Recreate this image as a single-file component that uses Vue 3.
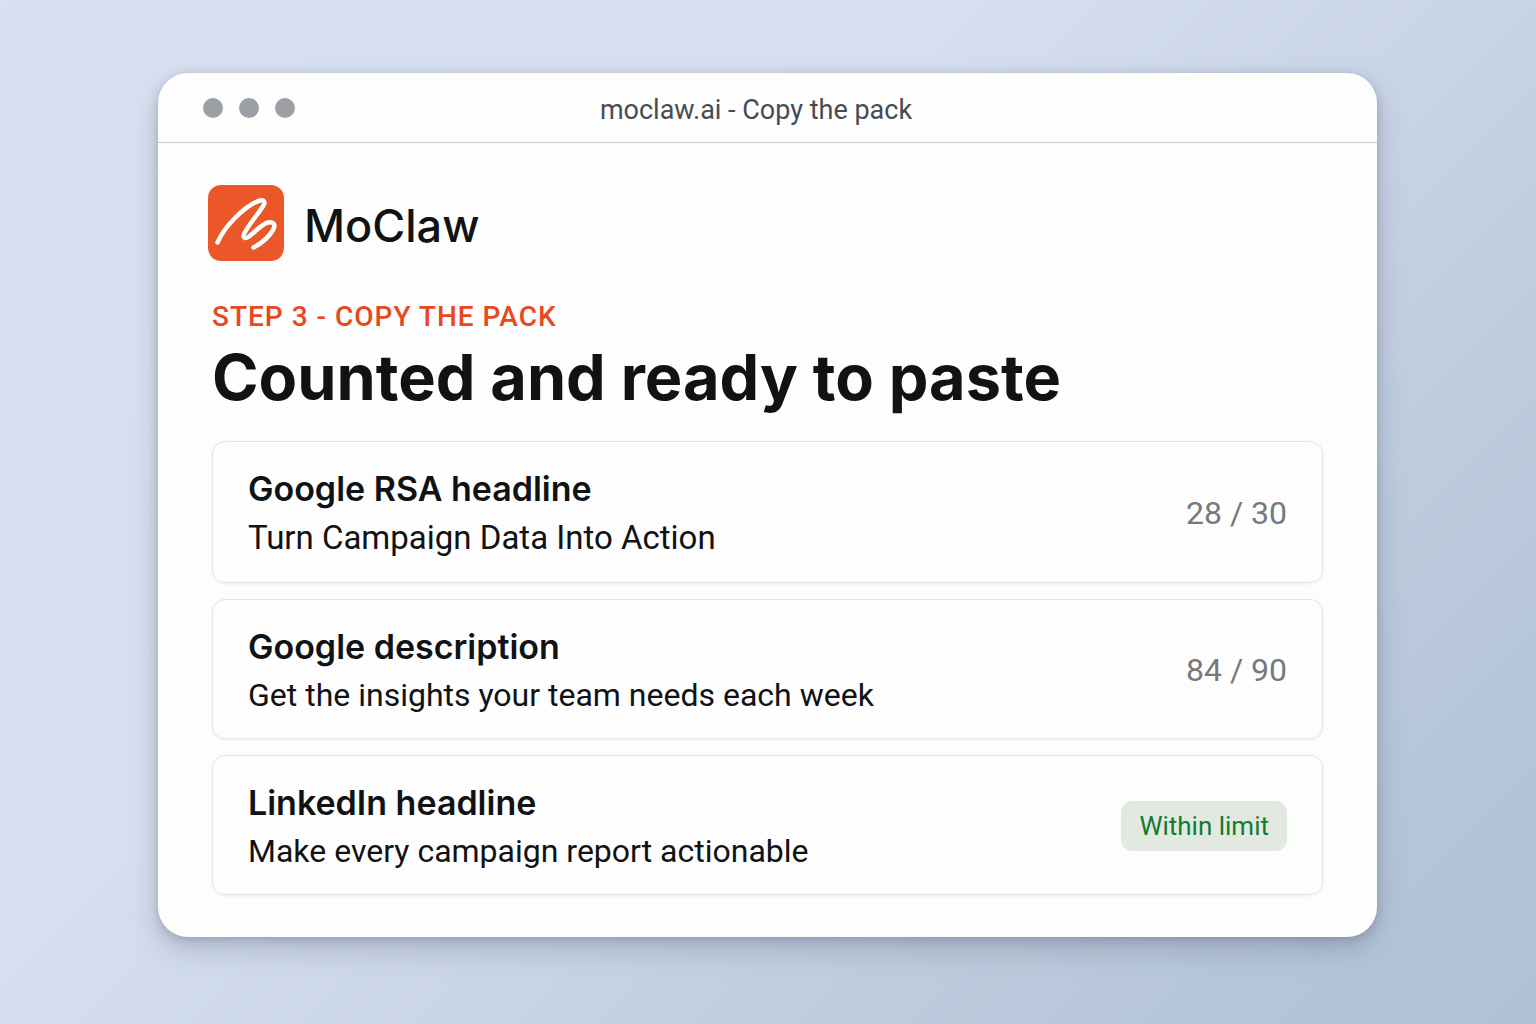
<script setup>
const rows = [
  { title: 'Google RSA headline', text: 'Turn Campaign Data Into Action', count: '28 / 30', lead: true },
  { title: 'Google description', text: 'Get the insights your team needs each week', count: '84 / 90' },
  { title: 'LinkedIn headline', text: 'Make every campaign report actionable', badge: 'Within limit' },
]
</script>

<template>
  <div class="page">
    <main class="window">
      <header class="titlebar">
        <div class="dots"><i></i><i></i><i></i></div>
        <p class="address">moclaw.ai - Copy the pack</p>
      </header>
      <div class="content">
        <div class="brand">
          <svg class="logo" viewBox="0 0 76 76" aria-hidden="true">
            <rect width="76" height="76" rx="13" fill="#eb5728" />
            <path
              d="M9.500 57.500C14 47 20 40 27 33C34 26 44 18 52 15.500C56 14.500 57.500 17 55.500 20.500C50 29 39 42 36 49C34.500 53 37 54.500 41 51.500C48 46 54 39 60 37.500C66 36 68 40 65 45C61 52 54 58 45.500 62.500"
              fill="none" stroke="#fff" stroke-width="4.500" stroke-linecap="round" stroke-linejoin="round"
            />
          </svg>
          <span class="name">MoClaw</span>
        </div>
        <p class="step">STEP 3 - COPY THE PACK</p>
        <h1>Counted and ready to paste</h1>
        <ul class="rows">
          <li v-for="row in rows" :key="row.title" class="row" :class="{ lead: row.lead }">
            <div class="copy">
              <h2>{{ row.title }}</h2>
              <p>{{ row.text }}</p>
            </div>
            <span v-if="row.badge" class="badge">{{ row.badge }}</span>
            <span v-else class="count">{{ row.count }}</span>
          </li>
        </ul>
      </div>
    </main>
  </div>
</template>

<style>
body { margin: 0; }
</style>

<style scoped>
.page {
  box-sizing: border-box;
  min-height: 100vh;
  padding: 73px 159px 87px 158px;
  background: linear-gradient(135deg, #d8e1f1 0%, #d5dfef 38%, #c8d3e4 60%, #bdcbdd 74%, #b5c5d8 87%, #b0c1d6 100%);
  font-family: Inter, "Liberation Sans", sans-serif;
  color: #101214;
}
h1, h2, p, ul { margin: 0; padding: 0; }
.window {
  border-radius: 30px;
  background: #fdfdfd;
  box-shadow: 0 12px 28px rgba(75, 85, 108, 0.28), 0 2px 8px rgba(75, 85, 108, 0.25);
}
.titlebar {
  display: flex;
  align-items: center;
  height: 69px;
  padding: 0 160px 0 45px;
  border-bottom: 1px solid #c9cbcd;
}
.dots { display: flex; gap: 16px; }
.dots i { width: 20px; height: 20px; border-radius: 50%; background: #9ca0a6; }
.address {
  flex: 1;
  padding-top: 4px;
  font-family: Roboto, sans-serif;
  font-size: 27px;
  line-height: 32px;
  text-align: center;
  color: #484c51;
}
.content { padding: 42px 54px; }
.brand { display: flex; align-items: center; gap: 20px; margin-left: -4px; }
.logo { width: 76px; height: 76px; }
.name { padding-top: 6px; font-size: 45px; font-weight: 500; line-height: 56px; }
.step {
  margin-top: 39px;
  font-family: Roboto, sans-serif;
  font-size: 28px;
  font-weight: 500;
  line-height: 34px;
  letter-spacing: 1px;
  color: #e8481c;
}
h1 { margin-top: 4px; font-size: 63px; font-weight: 700; line-height: 78px; }
.rows { display: flex; flex-direction: column; gap: 16px; margin-top: 25px; list-style: none; }
.row {
  display: flex;
  align-items: center;
  justify-content: space-between;
  padding: 22px 35px 20px;
  border: 1px solid #e3e6e6;
  border-radius: 13px;
  box-shadow: 0 1px 3px rgba(30, 50, 50, 0.08);
}
h2 { font-size: 34px; font-weight: 600; line-height: 50px; }
.copy p, .count { font-family: Roboto, sans-serif; font-size: 32px; line-height: 46px; }
.lead .copy p { font-size: 33px; line-height: 48px; }
.count { color: #76797e; }
.badge {
  padding: 8px 18px;
  border-radius: 11px;
  background: #e1e9e1;
  font-family: Roboto, sans-serif;
  font-size: 26px;
  line-height: 34px;
  color: #147a30;
}
</style>
